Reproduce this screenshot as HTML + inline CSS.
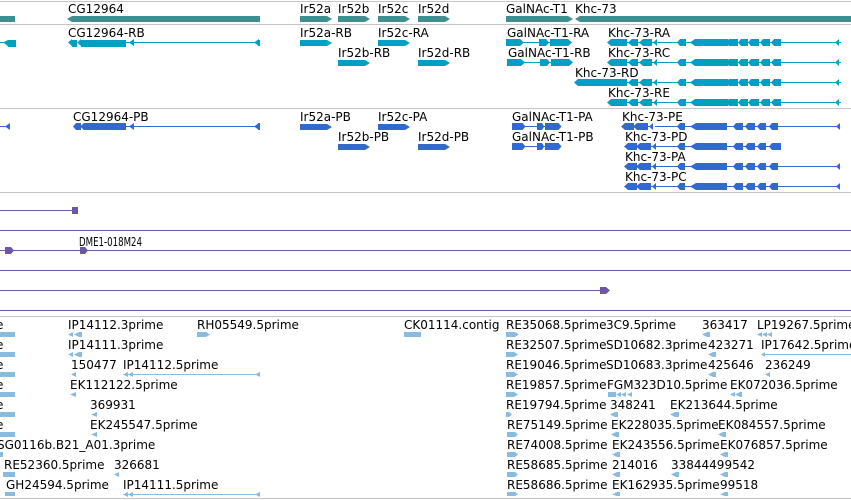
<!DOCTYPE html>
<html><head><meta charset="utf-8"><style>
html,body{margin:0;padding:0;background:#fff;width:851px;height:500px;overflow:hidden}
svg{display:block}
rect{shape-rendering:crispEdges}
text{font-family:"DejaVu Sans","Liberation Sans",sans-serif;font-size:12px;fill:#000}
</style></head><body>
<svg width="851" height="500" viewBox="0 0 851 500" xmlns="http://www.w3.org/2000/svg">
<defs>
<g id="kt">
<rect x="653" y="0" width="188" height="1"/>
<polygon points="653,0.5 657,-3 657,4"/>
<rect x="680" y="-3" width="6" height="7"/><polygon points="677,0.5 680,-3 680,4"/>
<rect x="695" y="-3" width="33" height="7"/><polygon points="690,0.5 695,-3 695,4"/>
<rect x="729" y="-3" width="9" height="7"/><polygon points="726,0.5 729,-3 729,4"/>
<rect x="741" y="-3" width="7" height="7"/><polygon points="738,0.5 741,-3 741,4"/>
<rect x="751" y="-3" width="8" height="7"/><polygon points="748,0.5 751,-3 751,4"/>
<rect x="763" y="-3" width="7" height="7"/><polygon points="760,0.5 763,-3 763,4"/>
<rect x="774" y="-3" width="7" height="7"/><polygon points="771,0.5 774,-3 774,4"/>
<polygon points="835,0.5 839,-3 839,4"/>
</g>
<g id="kh">
<rect x="611" y="-3" width="16" height="7"/><polygon points="607,0.5 611,-3 611,4"/>
<rect x="632" y="-3" width="6" height="7"/><polygon points="628,0.5 632,-3 632,4"/>
<rect x="643" y="-3" width="9" height="7"/><polygon points="639,0.5 643,-3 643,4"/>
<rect x="627" y="0" width="30" height="1"/>
</g>
<g id="pt">
<rect x="655" y="0" width="185" height="1"/>
<rect x="680" y="-3" width="5" height="7"/><polygon points="677,0.5 680,-3 680,4"/>
<rect x="696" y="-3" width="31" height="7"/><polygon points="690,0.5 696,-3 696,4"/>
<rect x="736" y="-3" width="7" height="7"/><polygon points="733,0.5 736,-3 736,4"/>
<rect x="748" y="-3" width="7" height="7"/><polygon points="745,0.5 748,-3 748,4"/>
<rect x="760" y="-3" width="6" height="7"/><polygon points="757,0.5 760,-3 760,4"/>
<rect x="772" y="-3" width="6" height="7"/><polygon points="769,0.5 772,-3 772,4"/>
<polygon points="836,0.5 840,-3 840,4"/>
</g>
<g id="ph">
<rect x="628" y="-3" width="9" height="7"/><polygon points="624,0.5 628,-3 628,4"/>
<rect x="640" y="-3" width="11" height="7"/><polygon points="636,0.5 640,-3 640,4"/>
<rect x="625" y="0" width="30" height="1"/>
<polygon points="652,0.5 656,-3 656,4"/>
</g>
<g id="gal">
<rect x="0" y="-3" width="14" height="7"/><polygon points="14,-3 18,0.5 14,4"/>
<rect x="0" y="0" width="60" height="1"/>
<rect x="33" y="-3" width="7" height="7"/><polygon points="40,-3 43,0.5 40,4"/>
<rect x="44" y="-3" width="18" height="7"/><polygon points="62,-3 66,0.5 62,4"/>
</g>
</defs>

<g fill="#c4c4c4">
<rect x="0" y="1" width="851" height="1"/>
<rect x="0" y="24" width="851" height="1"/>
<rect x="0" y="108" width="851" height="1"/>
<rect x="0" y="192" width="851" height="1"/>
<rect x="0" y="316" width="851" height="1"/>
<rect x="0" y="498" width="851" height="1"/>
</g>

<g fill="#3f8f90">
<rect x="0" y="16" width="15" height="6"/>
<rect x="72" y="16" width="188" height="6"/><polygon points="67,19 72,16 72,22"/>
<rect x="300" y="16" width="27" height="6"/><polygon points="327,16 332,19 327,22"/>
<rect x="338" y="16" width="27" height="6"/><polygon points="365,16 370,19 365,22"/>
<rect x="378" y="16" width="27" height="6"/><polygon points="405,16 410,19 405,22"/>
<rect x="418" y="16" width="27" height="6"/><polygon points="445,16 450,19 445,22"/>
<rect x="506" y="16" width="62" height="6"/><polygon points="568,16 573,19 568,22"/>
<rect x="580" y="16" width="271" height="6"/><polygon points="575,19 580,16 580,22"/>
</g>
<text x="68" y="13">CG12964</text>
<text x="300" y="13">Ir52a</text><text x="338" y="13">Ir52b</text><text x="378" y="13">Ir52c</text><text x="418" y="13">Ir52d</text>
<text x="506" y="13">GalNAc-T1</text><text x="575" y="13">Khc-73</text>

<g fill="#00a0c0">
<rect x="0" y="42" width="8" height="1"/><rect x="8" y="40" width="8" height="7"/><polygon points="3,42.5 8,40 8,46"/>
<rect x="72" y="40" width="5" height="7"/><polygon points="68,42.5 72,39 72,46"/>
<rect x="81" y="40" width="45" height="7"/><polygon points="77,42.5 81,39 81,46"/>
<rect x="126" y="42" width="134" height="1"/><polygon points="129,42.5 134,39 134,46"/><polygon points="254,42.5 259,39 259,46"/><rect x="258" y="40" width="2" height="6"/>
<rect x="300" y="40" width="27" height="6"/><polygon points="327,40 332,43 327,46"/>
<rect x="378" y="40" width="27" height="6"/><polygon points="405,40 410,43 405,46"/>
<rect x="338" y="60" width="27" height="6"/><polygon points="365,60 370,63 365,66"/>
<rect x="418" y="60" width="27" height="6"/><polygon points="445,60 450,63 445,66"/>
<use href="#gal" transform="translate(506,42)"/>
<use href="#gal" transform="translate(507,62)"/>
<use href="#kh" transform="translate(0,42)"/><use href="#kt" transform="translate(0,42)"/>
<use href="#kh" transform="translate(0,62)"/><use href="#kt" transform="translate(0,62)"/>
<rect x="578" y="79" width="49" height="7"/><polygon points="574,82.5 578,79 578,86"/>
<use href="#kh" transform="translate(0,82)"/><use href="#kt" transform="translate(0,82)"/>
<use href="#kh" transform="translate(0,102)"/><use href="#kt" transform="translate(0,102)"/>
</g>
<text x="68" y="37">CG12964-RB</text><text x="300" y="37">Ir52a-RB</text><text x="378" y="37">Ir52c-RA</text>
<text x="507" y="37">GalNAc-T1-RA</text><text x="608" y="37">Khc-73-RA</text>
<text x="338" y="57">Ir52b-RB</text><text x="418" y="57">Ir52d-RB</text>
<text x="508" y="57">GalNAc-T1-RB</text><text x="608" y="57">Khc-73-RC</text>
<text x="575" y="77">Khc-73-RD</text>
<text x="608" y="97">Khc-73-RE</text>

<g fill="#3369cc">
<rect x="0" y="126" width="7" height="1"/><polygon points="5,126.5 10,123 10,130"/>
<rect x="76" y="123" width="5" height="7"/><polygon points="73,126.5 76,123 76,130"/>
<rect x="84" y="123" width="42" height="7"/><polygon points="80,126.5 84,123 84,130"/>
<rect x="126" y="126" width="134" height="1"/><polygon points="129,126.5 134,123 134,130"/><polygon points="254,126.5 259,123 259,130"/><rect x="258" y="123" width="2" height="7"/>
<rect x="300" y="124" width="27" height="6"/><polygon points="327,124 332,127 327,130"/>
<rect x="378" y="124" width="27" height="6"/><polygon points="405,124 410,127 405,130"/>
<rect x="338" y="144" width="27" height="6"/><polygon points="365,144 370,147 365,150"/>
<rect x="418" y="144" width="27" height="6"/><polygon points="445,144 450,147 445,150"/>
<use href="#gal" transform="translate(512,126) scale(0.75,1)"/>
<use href="#gal" transform="translate(512,146) scale(0.75,1)"/>
<use href="#ph" transform="translate(-3,126)"/><use href="#pt" transform="translate(0,126)"/>
<use href="#ph" transform="translate(0,146)"/>
<g transform="translate(0,146)"><rect x="655" y="0" width="126" height="1"/>
<rect x="680" y="-3" width="5" height="7"/><polygon points="677,0.5 680,-3 680,4"/>
<rect x="696" y="-3" width="31" height="7"/><polygon points="690,0.5 696,-3 696,4"/>
<rect x="736" y="-3" width="7" height="7"/><polygon points="733,0.5 736,-3 736,4"/>
<rect x="748" y="-3" width="7" height="7"/><polygon points="745,0.5 748,-3 748,4"/>
<rect x="760" y="-3" width="6" height="7"/><polygon points="757,0.5 760,-3 760,4"/>
<rect x="772" y="-3" width="9" height="7"/><polygon points="769,0.5 772,-3 772,4"/></g>
<use href="#ph" transform="translate(0,166)"/><use href="#pt" transform="translate(0,166)"/>
<use href="#ph" transform="translate(0,186)"/><use href="#pt" transform="translate(0,186)"/>
</g>
<text x="73" y="121">CG12964-PB</text><text x="300" y="121">Ir52a-PB</text><text x="378" y="121">Ir52c-PA</text>
<text x="512" y="121">GalNAc-T1-PA</text><text x="622" y="121">Khc-73-PE</text>
<text x="338" y="141">Ir52b-PB</text><text x="418" y="141">Ir52d-PB</text>
<text x="512" y="141">GalNAc-T1-PB</text><text x="625" y="141">Khc-73-PD</text>
<text x="625" y="161">Khc-73-PA</text>
<text x="625" y="181">Khc-73-PC</text>

<g fill="#6b57a5">
<rect x="0" y="210" width="74" height="1"/><rect x="72" y="207" width="6" height="7"/>
<rect x="0" y="230" width="851" height="1"/>
<rect x="0" y="250" width="851" height="1"/><rect x="5" y="247" width="6" height="7"/><polygon points="11,247 14,250.5 11,254"/>
<rect x="80" y="247" width="5" height="7"/><polygon points="85,247 88,250.5 85,254"/>
<rect x="0" y="270" width="851" height="1"/>
<rect x="0" y="290" width="605" height="1"/><rect x="600" y="287" width="6" height="7"/><polygon points="606,287 610,290.5 606,294"/>
<rect x="0" y="310" width="851" height="1"/>
</g>
<text x="79" y="246" style="font-size:12px" transform="translate(79,0) scale(0.72,1) translate(-79,0)">DME1-018M24</text>

<g fill="#88bbdd">
<rect x="0" y="332" width="15" height="5"/><rect x="0" y="352" width="15" height="5"/><rect x="0" y="372" width="15" height="5"/><rect x="0" y="392" width="15" height="5"/><rect x="0" y="412" width="15" height="5"/><rect x="0" y="432" width="15" height="5"/><rect x="0" y="452" width="3" height="5"/><rect x="3" y="472" width="12" height="5"/><rect x="5" y="492" width="10" height="4"/>
<polygon points="68,334.5 73,332 73,337"/><polygon points="74,334.5 79,332 79,337"/><rect x="79" y="332" width="3" height="5"/>
<polygon points="68,354.5 73,352 73,357"/><polygon points="74,354.5 79,352 79,357"/><rect x="79" y="352" width="3" height="5"/>
<rect x="197" y="332" width="9" height="5"/><polygon points="206,332 210,334.5 206,337"/>
<rect x="404" y="332" width="17" height="5"/>
<polygon points="71,374.5 76,372 76,377"/>
<rect x="123" y="374" width="137" height="1"/><polygon points="123,374.5 128,372 128,377"/><polygon points="128,374.5 133,372 133,377"/><polygon points="255,374.5 260,372 260,377"/>
<polygon points="70,394.5 76,392 76,397"/>
<polygon points="91,414.5 97,412 97,417"/>
<polygon points="91,434.5 97,432 97,437"/>
<polygon points="114,474.5 119,472 119,477"/>
<rect x="123" y="494" width="137" height="1"/><polygon points="123,494.5 128,492 128,497"/><polygon points="128,494.5 133,492 133,497"/><polygon points="255,494.5 260,492 260,497"/>
<rect x="506" y="332" width="9" height="5"/><polygon points="515,332 519,334.5 515,337"/>
<rect x="506" y="352" width="8" height="5"/><polygon points="514,352 518,354.5 514,357"/>
<rect x="506" y="372" width="8" height="5"/><polygon points="514,372 518,374.5 514,377"/>
<rect x="506" y="392" width="8" height="5"/><polygon points="514,392 518,394.5 514,397"/>
<rect x="506" y="412" width="3" height="5"/><polygon points="509,412 512,414.5 509,417"/>
<rect x="507" y="432" width="8" height="5"/><polygon points="515,432 518,434.5 515,437"/>
<rect x="507" y="452" width="8" height="5"/><polygon points="515,452 518,454.5 515,457"/>
<rect x="507" y="472" width="8" height="5"/><polygon points="515,472 518,474.5 515,477"/>
<rect x="507" y="492" width="8" height="4"/><polygon points="515,492 518,494.5 515,496"/>
<polygon points="702,334.5 707,332 707,337"/><rect x="707" y="332" width="3" height="5"/>
<polygon points="757,334.5 762,332 762,337"/><polygon points="762,334.5 767,332 767,337"/><polygon points="767,334.5 772,332 772,337"/>
<polygon points="708,354.5 713,352 713,357"/><rect x="713" y="352" width="3" height="5"/>
<rect x="762" y="354" width="89" height="1"/><polygon points="761,354.5 765,352 765,357"/>
<polygon points="708,374.5 713,372 713,377"/><rect x="713" y="372" width="3" height="5"/>
<polygon points="765,374.5 770,372 770,377"/>
<rect x="608" y="392" width="8" height="5"/><polygon points="616,394.5 621,392 621,397"/><polygon points="621,394.5 626,392 626,397"/><polygon points="627,394.5 632,392 632,397"/>
<polygon points="730,394.5 735,392 735,397"/><polygon points="735,394.5 740,392 740,397"/><rect x="740" y="392" width="2" height="5"/>
<polygon points="610,414.5 615,412 615,417"/><rect x="615" y="412" width="3" height="5"/>
<polygon points="670,414.5 675,412 675,417"/><rect x="675" y="412" width="4" height="5"/>
<polygon points="611,434.5 616,432 616,437"/><rect x="616" y="432" width="3" height="5"/>
<polygon points="718,434.5 723,432 723,437"/><rect x="723" y="432" width="3" height="5"/>
<polygon points="612,454.5 617,452 617,457"/><rect x="617" y="452" width="3" height="5"/>
<polygon points="720,454.5 725,452 725,457"/><rect x="725" y="452" width="3" height="5"/>
<polygon points="612,474.5 617,472 617,477"/><rect x="617" y="472" width="3" height="5"/>
<polygon points="671,474.5 676,472 676,477"/><rect x="676" y="472" width="3" height="5"/>
<polygon points="720,474.5 725,472 725,477"/><rect x="725" y="472" width="3" height="5"/>
<polygon points="612,494.5 617,492 617,496"/><rect x="617" y="492" width="3" height="4"/>
<polygon points="720,494.5 725,492 725,496"/><rect x="725" y="492" width="3" height="4"/>
</g>
<g>
<text x="-4" y="329">e</text><text x="-4" y="349">e</text><text x="-4" y="369">e</text><text x="-4" y="389">e</text><text x="-4" y="409">e</text><text x="-4" y="429">e</text>
<text x="-3" y="449">SG0116b.B21_A01.3prime</text>
<text x="4" y="469">RE52360.5prime</text><text x="114" y="469">326681</text>
<text x="6" y="489">GH24594.5prime</text><text x="123" y="489">IP14111.5prime</text>
<text x="68" y="329">IP14112.3prime</text><text x="197" y="329">RH05549.5prime</text><text x="404" y="329">CK01114.contig</text>
<text x="68" y="349">IP14111.3prime</text>
<text x="71" y="369">150477</text><text x="123" y="369">IP14112.5prime</text>
<text x="70" y="389">EK112122.5prime</text>
<text x="90" y="409">369931</text>
<text x="90" y="429">EK245547.5prime</text>
<text x="506" y="329">RE35068.5prime</text><text x="606" y="329">3C9.5prime</text><text x="702" y="329">363417</text><text x="757" y="329">LP19267.5prime</text>
<text x="506" y="349">RE32507.5prime</text><text x="606" y="349">SD10682.3prime</text><text x="708" y="349">423271</text><text x="761" y="349">IP17642.5prime</text>
<text x="506" y="369">RE19046.5prime</text><text x="606" y="369">SD10683.3prime</text><text x="708" y="369">425646</text><text x="765" y="369">236249</text>
<text x="506" y="389">RE19857.5prime</text><text x="607" y="389">FGM323D10.5prime</text><text x="730" y="389">EK072036.5prime</text>
<text x="506" y="409">RE19794.5prime</text><text x="610" y="409">348241</text><text x="670" y="409">EK213644.5prime</text>
<text x="507" y="429">RE75149.5prime</text><text x="611" y="429">EK228035.5prime</text><text x="718" y="429">EK084557.5prime</text>
<text x="507" y="449">RE74008.5prime</text><text x="612" y="449">EK243556.5prime</text><text x="720" y="449">EK076857.5prime</text>
<text x="507" y="469">RE58685.5prime</text><text x="612" y="469">214016</text><text x="671" y="469">33844499542</text>
<text x="507" y="489">RE58686.5prime</text><text x="612" y="489">EK162935.5prime</text><text x="720" y="489">99518</text>
</g>
</svg>
</body></html>
